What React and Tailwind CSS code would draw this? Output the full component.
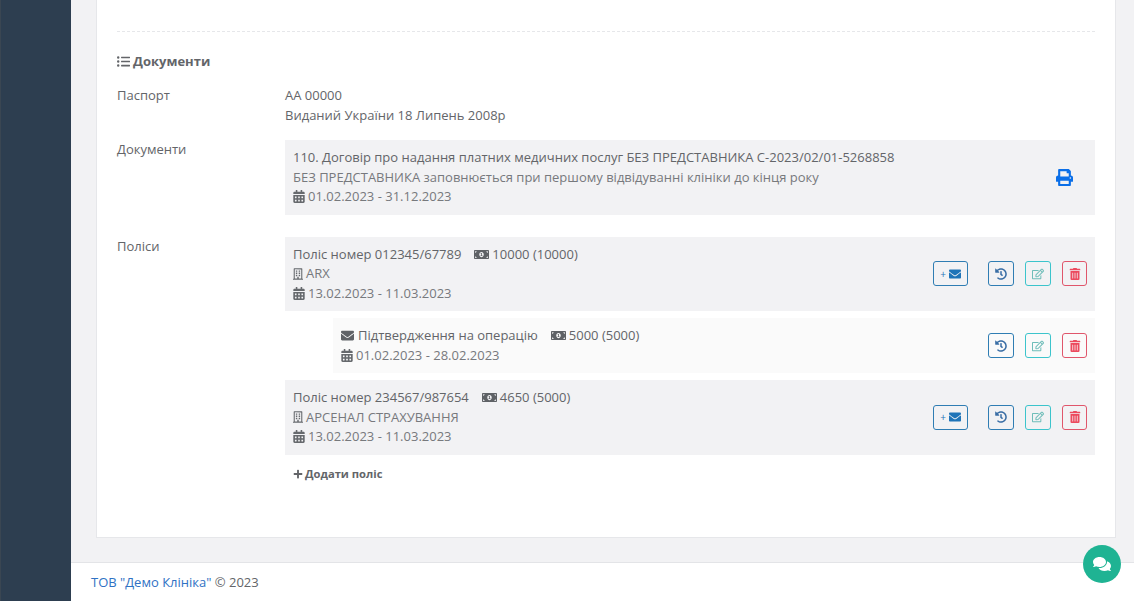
import {
  FaListUl,
  FaCalendarAlt,
  FaMoneyBillAlt,
  FaRegBuilding,
  FaEnvelope,
  FaHistory,
  FaRegEdit,
  FaTrashAlt,
  FaPrint,
  FaPlus,
  FaComments,
} from "react-icons/fa";

function Actions({ withMail }) {
  return (
    <div className="flex items-center">
      {withMail && (
        <button
          type="button"
          className="flex h-[25px] w-[35px] items-center justify-center gap-[3px] rounded-[3px] border border-[#2f7db3] text-[#1f74b8]"
        >
          <span className="text-[10px] leading-none">+</span>
          <FaEnvelope className="h-[12px] w-[12px]" />
        </button>
      )}
      <button
        type="button"
        className="ml-[20px] flex h-[25px] w-[26px] items-center justify-center rounded-[3px] border border-[#2f7db3] text-[#3a6ea5]"
      >
        <FaHistory className="h-[12px] w-[12px]" />
      </button>
      <button
        type="button"
        className="ml-[11px] flex h-[25px] w-[26px] items-center justify-center rounded-[3px] border border-[#3cc4cc] text-[#6fbdb9]"
      >
        <FaRegEdit className="h-[12px] w-[12px]" />
      </button>
      <button
        type="button"
        className="ml-[11px] flex h-[25px] w-[25px] items-center justify-center rounded-[3px] border border-[#e0566b] text-[#ec4a5e]"
      >
        <FaTrashAlt className="h-[12px] w-[12px]" />
      </button>
    </div>
  );
}

function Dates({ children }) {
  return (
    <div className="flex items-center gap-[3px] text-[#77797d]">
      <FaCalendarAlt className="h-[13px] w-[12px] text-[#66696d]" />
      {children}
    </div>
  );
}

function Money({ children }) {
  return (
    <span className="ml-[13px] inline-flex items-center gap-[3px]">
      <FaMoneyBillAlt className="h-[15px] w-[15px] text-[#5f6266]" />
      {children}
    </span>
  );
}

function Policy({ number, sum, company }) {
  return (
    <div className="flex items-center justify-between bg-[#f2f2f4] px-2 py-2">
      <div className="leading-[19.5px]">
        <div className="flex items-center text-[#636569]">
          Поліс номер {number}
          <Money>{sum}</Money>
        </div>
        <div className="flex items-center gap-[3px] text-[#77797d]">
          <FaRegBuilding className="h-[14px] w-[10px] text-[#66696d]" />
          {company}
        </div>
        <Dates>13.02.2023 - 11.03.2023</Dates>
      </div>
      <Actions withMail />
    </div>
  );
}

export default function App() {
  return (
    <div className="relative flex h-[601px] overflow-hidden bg-[#f2f2f4] font-['Open_Sans',sans-serif] text-[13px] text-[#636569]">
      <aside className="w-[71px] shrink-0 border-l border-[#3a4652] bg-[#2d3e50]" />
      <main className="flex min-w-0 flex-1 flex-col">
        <section className="ml-[25px] mr-[18px] h-[538px] shrink-0 border-x border-b border-[#e6e7ea] bg-white px-5">
          <div className="h-[32px] border-b border-dashed border-[#e6e7ea]" />
          <h3 className="mt-[19px] flex items-center gap-[3px] text-[13px] font-bold leading-[20px] text-[#636569]">
            <FaListUl className="h-[13px] w-[13px]" />
            Документи
          </h3>

          <div className="mt-[14px] grid grid-cols-[168px_1fr] leading-[20px]">
            <div>Паспорт</div>
            <div>
              <div>АА 00000</div>
              <div>Виданий України 18 Липень 2008р</div>
            </div>

            <div className="mt-[14px]">Документи</div>
            <div className="mt-[15px] flex items-center justify-between bg-[#f2f2f4] py-2 pl-2 pr-[22px] leading-[19.5px]">
              <div>
                <div>110. Договір про надання платних медичних послуг БЕЗ ПРЕДСТАВНИКА С-2023/02/01-5268858</div>
                <div className="text-[#77797d]">БЕЗ ПРЕДСТАВНИКА заповнюється при першому відвідуванні клініки до кінця року</div>
                <Dates>01.02.2023 - 31.12.2023</Dates>
              </div>
              <FaPrint className="h-[17px] w-[17px] text-[#0b6fe8]" />
            </div>

            <div className="mt-[21px]">Поліси</div>
            <div className="mt-[22px]">
              <Policy number="012345/67789" sum="10000 (10000)" company="ARX" />
              <div className="ml-[48px] mt-[7px] flex items-center justify-between bg-[#fafafa] px-2 py-2 leading-[19.5px]">
                <div>
                  <div className="flex items-center">
                    <FaEnvelope className="mr-[4px] h-[13px] w-[13px] text-[#5f6266]" />
                    Підтвердження на операцію
                    <Money>5000 (5000)</Money>
                  </div>
                  <Dates>01.02.2023 - 28.02.2023</Dates>
                </div>
                <Actions />
              </div>
              <div className="mt-[7px]">
                <Policy number="234567/987654" sum="4650 (5000)" company="АРСЕНАЛ СТРАХУВАННЯ" />
              </div>
              <div className="mt-[10px] flex items-center gap-[2px] pl-2 text-[11.2px] font-bold leading-[18px] text-[#636569]">
                <FaPlus className="h-[10px] w-[10px]" />
                Додати поліс
              </div>
            </div>
          </div>
        </section>
        <footer className="mt-[24px] flex-1 border-t border-[#e3e4e7] bg-white pl-[20px] pt-[9px] leading-[20px]">
          <span className="text-[#2f72c4]">ТОВ "Демо Клініка"</span> © 2023
        </footer>
      </main>
      <button
        type="button"
        className="absolute left-[1083px] top-[545px] flex h-[38px] w-[38px] items-center justify-center rounded-full bg-[#1fb393] text-white"
      >
        <FaComments className="h-[18px] w-[18px]" />
      </button>
    </div>
  );
}
